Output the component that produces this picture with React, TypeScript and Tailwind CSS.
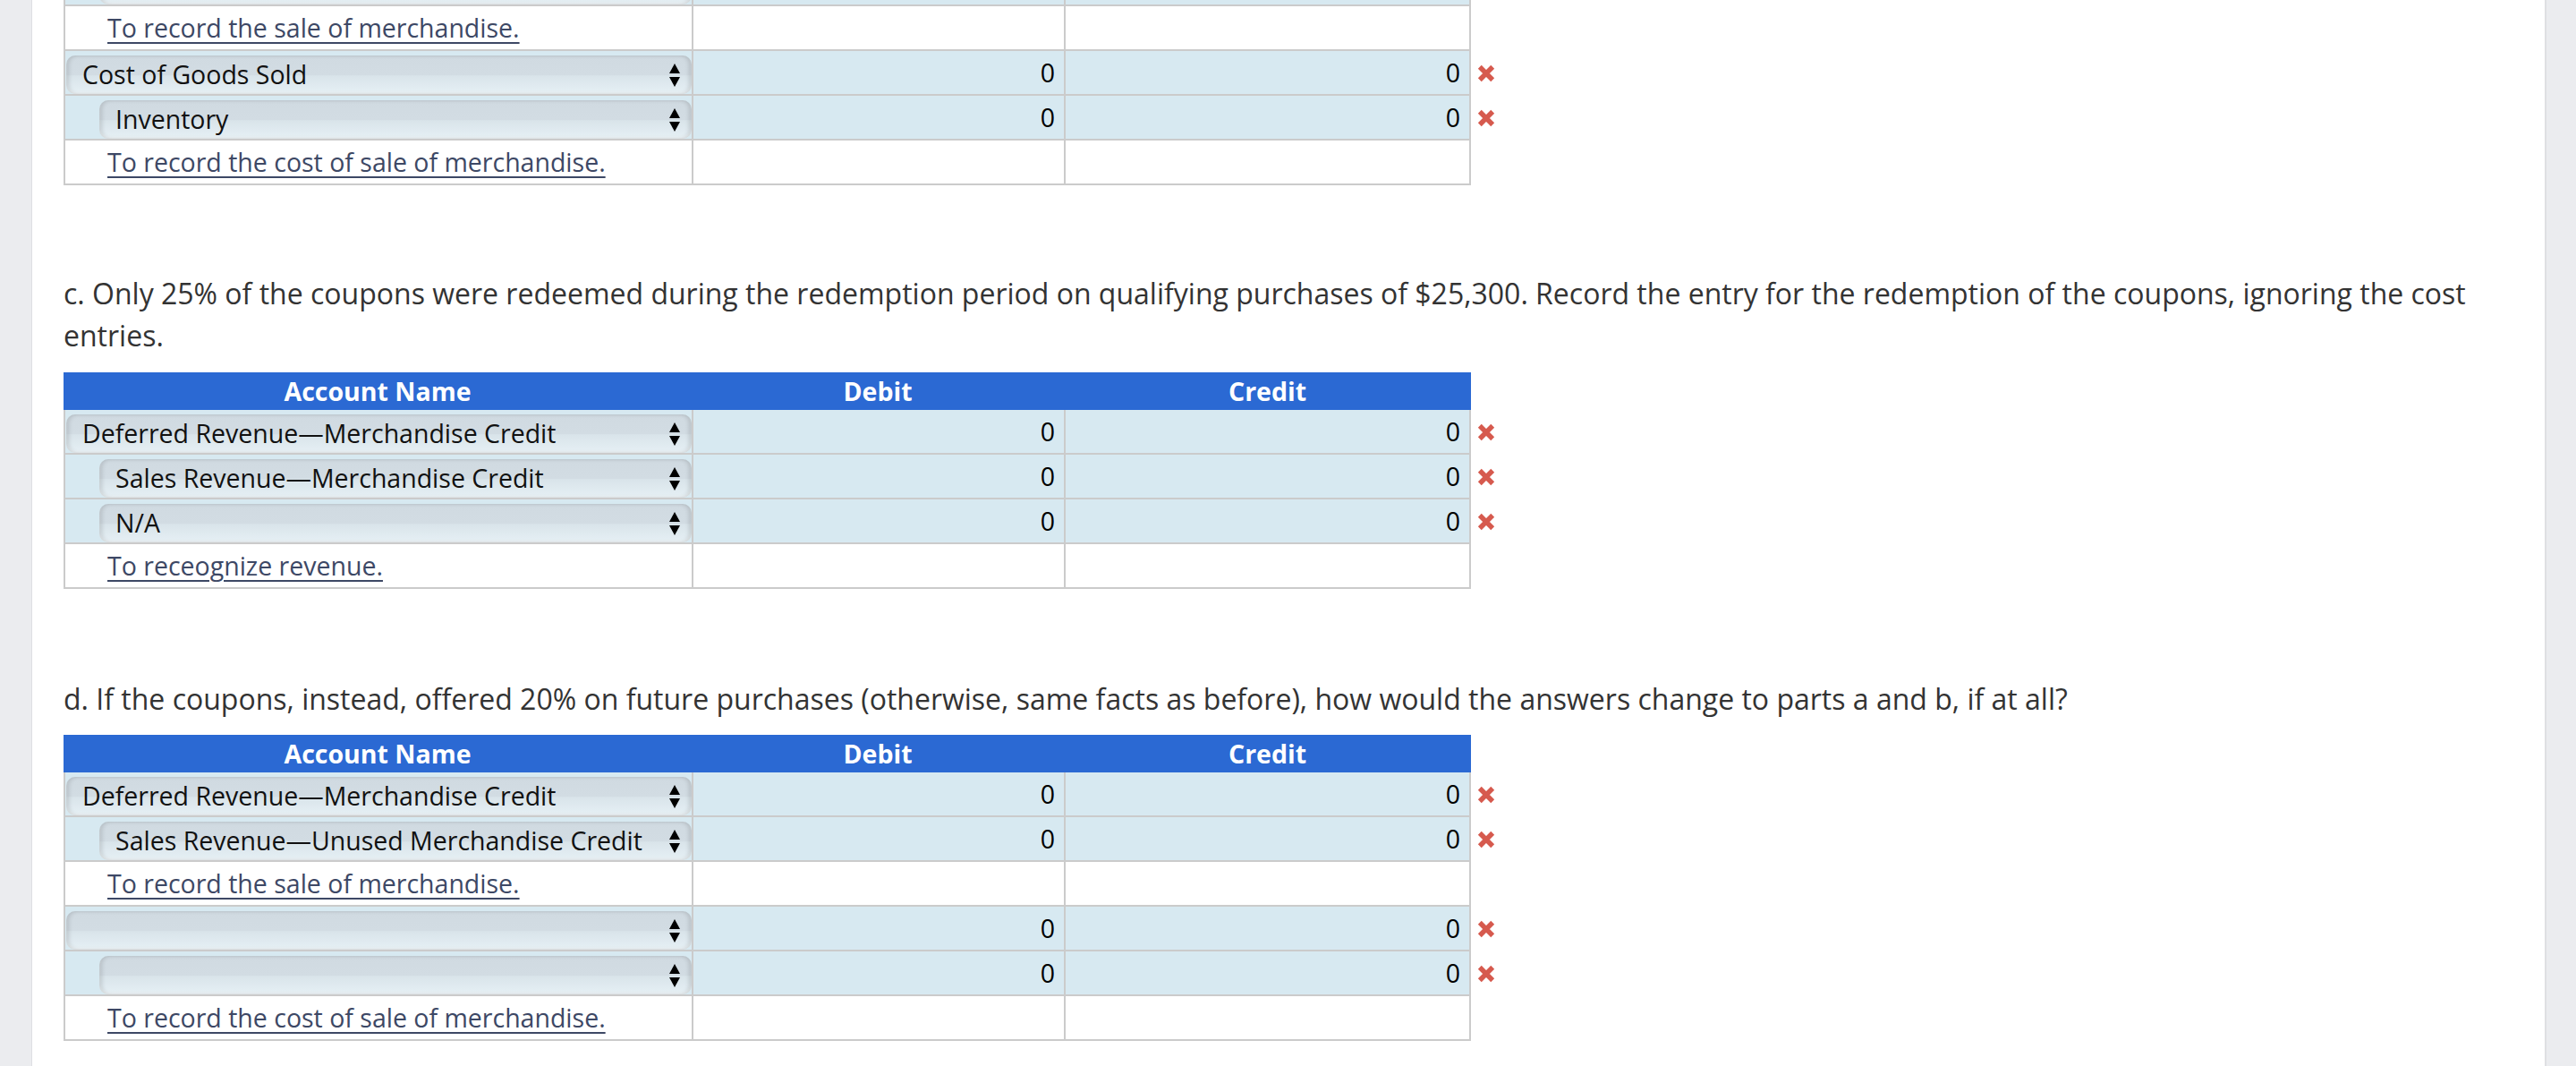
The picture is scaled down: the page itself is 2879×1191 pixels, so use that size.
import React from "react";

type Row =
  | { kind: "select"; label: string; indent: boolean; hidden?: boolean }
  | { kind: "link"; label: string };

function Arrows() {
  return (
    <svg width="12" height="26" viewBox="0 0 12 26" className="shrink-0">
      <path d="M6 0 L12 11 L0 11 Z" fill="#000" />
      <path d="M0 15 L12 15 L6 26 Z" fill="#000" />
    </svg>
  );
}

function XMark() {
  return (
    <svg width="20" height="20" viewBox="0 0 20 20">
      <path d="M2.8 2.8 L17.2 17.2 M17.2 2.8 L2.8 17.2" stroke="#d65a4e" strokeWidth="5.5" />
    </svg>
  );
}

function TableRow({ row }: { row: Row }) {
  if (row.kind === "link") {
    return (
      <div className="flex h-[50px]">
        <div className="flex h-full w-[702px] items-center border-b-2 border-l-2 border-[#cbcbcb] bg-white pl-[47px]">
          <span className="text-[#3d4865] underline decoration-[2px] underline-offset-[5px]">{row.label}</span>
        </div>
        <div className="h-full w-[416px] border-b-2 border-l-2 border-[#cbcbcb] bg-white" />
        <div className="h-full w-[455px] border-b-2 border-l-2 border-r-2 border-[#cbcbcb] bg-white" />
      </div>
    );
  }
  const value = row.hidden ? "" : "0";
  return (
    <div className="flex h-[50px]">
      <div
        className={`h-full w-[702px] border-b-2 border-l-2 border-[#cbcbcb] bg-[#d7e9f1] pt-[5px] pr-0 ${
          row.indent ? "pl-[38px]" : "pl-px"
        }`}
      >
        <div className="flex h-full items-center justify-between rounded-[10px] bg-[linear-gradient(to_bottom,#d0dae1_0%,#d2dce3_50%,#d9e4ea_53%,#e6f0f5_100%)] pl-[18px] pr-[13px] text-[#111] shadow-[inset_4px_0_5px_-1px_rgba(0,0,0,0.13),inset_-4px_0_5px_-1px_rgba(0,0,0,0.13),inset_0_-2px_3px_rgba(255,255,255,0.5)]">
          <span className="whitespace-nowrap">{row.label}</span>
          <Arrows />
        </div>
      </div>
      <div className="flex h-full w-[416px] items-center justify-end border-b-2 border-l-2 border-[#cbcbcb] bg-[#d7e9f1] pr-[10px] text-black">
        {value}
      </div>
      <div className="flex h-full w-[455px] items-center justify-end border-b-2 border-l-2 border-r-2 border-[#cbcbcb] bg-[#d7e9f1] pr-[10px] text-black">
        {value}
      </div>
      <div className="flex h-full items-center pl-[7px]">{!row.hidden && <XMark />}</div>
    </div>
  );
}

function Header() {
  return (
    <div className="flex h-[42px] w-[1573px] items-center bg-[#2b69d3] font-bold text-white">
      <div className="w-[702px] text-center">Account Name</div>
      <div className="w-[416px] text-center">Debit</div>
      <div className="w-[455px] text-center">Credit</div>
    </div>
  );
}

function Table({ rows, header }: { rows: Row[]; header: boolean }) {
  return (
    <div className="flex flex-col">
      {header && <Header />}
      {rows.map((r, i) => (
        <TableRow key={i} row={r} />
      ))}
    </div>
  );
}

const topRows: Row[] = [
  { kind: "select", label: "", indent: true, hidden: true },
  { kind: "link", label: "To record the sale of merchandise." },
  { kind: "select", label: "Cost of Goods Sold", indent: false },
  { kind: "select", label: "Inventory", indent: true },
  { kind: "link", label: "To record the cost of sale of merchandise." },
];

const cRows: Row[] = [
  { kind: "select", label: "Deferred Revenue—Merchandise Credit", indent: false },
  { kind: "select", label: "Sales Revenue—Merchandise Credit", indent: true },
  { kind: "select", label: "N/A", indent: true },
  { kind: "link", label: "To receognize revenue." },
];

const dRows: Row[] = [
  { kind: "select", label: "Deferred Revenue—Merchandise Credit", indent: false },
  { kind: "select", label: "Sales Revenue—Unused Merchandise Credit", indent: true },
  { kind: "link", label: "To record the sale of merchandise." },
  { kind: "select", label: "", indent: false },
  { kind: "select", label: "", indent: true },
  { kind: "link", label: "To record the cost of sale of merchandise." },
];

export default function App() {
  return (
    <div className="flex h-[1191px] w-full overflow-hidden bg-white font-['Open_Sans',sans-serif] text-[28.5px]">
      <div className="h-full w-[36px] shrink-0 border-r border-[#dedfe3] bg-[#ebecef]" />
      <div className="flex-1 overflow-hidden px-[35px]">
        <div className="-mt-[43px]">
          <Table rows={topRows} header={false} />
        </div>
        <p className="mt-[97px] text-[32px] leading-[47px] text-[#333]">
          c. Only 25% of the coupons were redeemed during the redemption period on qualifying purchases of $25,300. Record the entry for the redemption of the coupons, ignoring the cost entries.
        </p>
        <div className="mt-[18px]">
          <Table rows={cRows} header={true} />
        </div>
        <p className="mt-[99px] text-[32px] leading-[47px] text-[#333]">
          d. If the coupons, instead, offered 20% on future purchases (otherwise, same facts as before), how would the answers change to parts a and b, if at all?
        </p>
        <div className="mt-[17px]">
          <Table rows={dRows} header={true} />
        </div>
      </div>
      <div className="h-full w-[35px] shrink-0 border-l-2 border-[#dfe0e3] bg-[#ebecef]" />
    </div>
  );
}
